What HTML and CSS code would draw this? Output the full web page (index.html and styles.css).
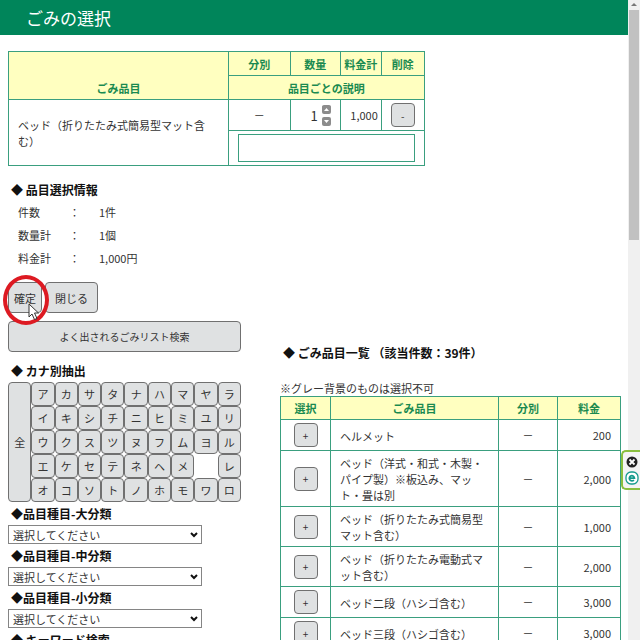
FILE: index.html
```html
<!DOCTYPE html>
<html lang="ja">
<head>
    <meta charset="UTF-8">
    <meta name="viewport" content="width=device-width, initial-scale=1.0">
    <title>ごみの選択</title>
    <link rel="stylesheet" href="styles.css">
</head>
<body>

    <div class="page">
        <header class="page-header">
            <h1>ごみの選択</h1>
        </header>

        <main class="content">
            <table class="data-table selected-table">
                <colgroup>
                    <col>
                    <col class="col-sort">
                    <col class="col-count">
                    <col class="col-total">
                    <col class="col-delete">
                </colgroup>
                <thead>
                    <tr>
                        <th rowspan="2" class="item-head">ごみ品目</th>
                        <th>分別</th>
                        <th>数量</th>
                        <th>料金計</th>
                        <th>削除</th>
                    </tr>
                    <tr>
                        <th colspan="4">品目ごとの説明</th>
                    </tr>
                </thead>
                <tbody>
                    <tr>
                        <td rowspan="2" class="name">ベッド（折りたたみ式簡易型マット含む）</td>
                        <td class="center">－</td>
                        <td>
                            <div class="counter">
                                <input type="number" value="1" aria-label="数量">
                                <div class="counter-buttons">
                                    <button type="button" aria-label="増やす"><svg viewBox="0 0 9 9"><path d="M2 6 L4.500 3 L7 6 Z"/></svg></button>
                                    <button type="button" aria-label="減らす"><svg viewBox="0 0 9 9"><path d="M2 3 L4.500 6 L7 3 Z"/></svg></button>
                                </div>
                            </div>
                        </td>
                        <td class="total">1,000</td>
                        <td class="center"><button type="button" class="btn square">-</button></td>
                    </tr>
                    <tr>
                        <td colspan="4" class="note"><input type="text" aria-label="品目ごとの説明"></td>
                    </tr>
                </tbody>
            </table>

            <section class="summary">
                <h2>◆ 品目選択情報</h2>
                <dl>
                    <div><dt>件数</dt><dd class="colon">：</dd><dd>1件</dd></div>
                    <div><dt>数量計</dt><dd class="colon">：</dd><dd>1個</dd></div>
                    <div><dt>料金計</dt><dd class="colon">：</dd><dd>1,000円</dd></div>
                </dl>
                <div class="actions">
                    <div class="confirm">
                        <button type="button" class="btn">確定</button>
                        <span class="marker"></span>
                        <svg class="cursor" viewBox="0 0 12 18"><path d="M1 1 V14 L4 11 L6.500 16.500 L9 15.500 L6.500 10 H10.500 Z"/></svg>
                    </div>
                    <button type="button" class="btn close">閉じる</button>
                </div>
            </section>

            <div class="columns">
                <section class="filters">
                    <button type="button" class="btn wide">よく出されるごみリスト検索</button>

                    <h2>◆ カナ別抽出</h2>
                    <div class="kana">
                        <button type="button" class="btn all">全</button>
                        <button type="button" class="btn">ア</button>
                        <button type="button" class="btn">カ</button>
                        <button type="button" class="btn">サ</button>
                        <button type="button" class="btn">タ</button>
                        <button type="button" class="btn">ナ</button>
                        <button type="button" class="btn">ハ</button>
                        <button type="button" class="btn">マ</button>
                        <button type="button" class="btn">ヤ</button>
                        <button type="button" class="btn">ラ</button>
                        <button type="button" class="btn">イ</button>
                        <button type="button" class="btn">キ</button>
                        <button type="button" class="btn">シ</button>
                        <button type="button" class="btn">チ</button>
                        <button type="button" class="btn">ニ</button>
                        <button type="button" class="btn">ヒ</button>
                        <button type="button" class="btn">ミ</button>
                        <button type="button" class="btn">ユ</button>
                        <button type="button" class="btn">リ</button>
                        <button type="button" class="btn">ウ</button>
                        <button type="button" class="btn">ク</button>
                        <button type="button" class="btn">ス</button>
                        <button type="button" class="btn">ツ</button>
                        <button type="button" class="btn">ヌ</button>
                        <button type="button" class="btn">フ</button>
                        <button type="button" class="btn">ム</button>
                        <button type="button" class="btn">ヨ</button>
                        <button type="button" class="btn">ル</button>
                        <button type="button" class="btn">エ</button>
                        <button type="button" class="btn">ケ</button>
                        <button type="button" class="btn">セ</button>
                        <button type="button" class="btn">テ</button>
                        <button type="button" class="btn">ネ</button>
                        <button type="button" class="btn">ヘ</button>
                        <button type="button" class="btn">メ</button>
                        <span></span>
                        <button type="button" class="btn">レ</button>
                        <button type="button" class="btn">オ</button>
                        <button type="button" class="btn">コ</button>
                        <button type="button" class="btn">ソ</button>
                        <button type="button" class="btn">ト</button>
                        <button type="button" class="btn">ノ</button>
                        <button type="button" class="btn">ホ</button>
                        <button type="button" class="btn">モ</button>
                        <button type="button" class="btn">ワ</button>
                        <button type="button" class="btn">ロ</button>
                    </div>

                    <label class="field-label" for="large">◆品目種目-大分類</label>
                    <div class="select-box">
                        <select id="large"><option>選択してください</option></select>
                        <svg viewBox="0 0 8 6"><path d="M1 1 L4 4 L7 1"/></svg>
                    </div>
                    <label class="field-label" for="middle">◆品目種目-中分類</label>
                    <div class="select-box">
                        <select id="middle"><option>選択してください</option></select>
                        <svg viewBox="0 0 8 6"><path d="M1 1 L4 4 L7 1"/></svg>
                    </div>
                    <label class="field-label" for="small">◆品目種目-小分類</label>
                    <div class="select-box">
                        <select id="small"><option>選択してください</option></select>
                        <svg viewBox="0 0 8 6"><path d="M1 1 L4 4 L7 1"/></svg>
                    </div>
                    <label class="field-label" for="keyword">◆ キーワード検索</label>
                    <input type="text" id="keyword" class="keyword">
                </section>

                <section class="results">
                    <h2>◆ ごみ品目一覧 （該当件数：39件）</h2>
                    <p>※グレー背景のものは選択不可</p>
                    <table class="data-table">
                        <colgroup>
                            <col class="col-select">
                            <col>
                            <col class="col-kind">
                            <col class="col-price">
                        </colgroup>
                        <thead>
                            <tr>
                                <th>選択</th>
                                <th>ごみ品目</th>
                                <th>分別</th>
                                <th>料金</th>
                            </tr>
                        </thead>
                        <tbody>
                            <tr>
                                <td class="center"><button type="button" class="btn square">+</button></td>
                                <td class="name">ヘルメット</td>
                                <td class="center">－</td>
                                <td class="price">200</td>
                            </tr>
                            <tr>
                                <td class="center"><button type="button" class="btn square">+</button></td>
                                <td class="name">ベッド（洋式・和式・木製・パイプ製）※板込み、マット・畳は別</td>
                                <td class="center">－</td>
                                <td class="price">2,000</td>
                            </tr>
                            <tr>
                                <td class="center"><button type="button" class="btn square">+</button></td>
                                <td class="name">ベッド（折りたたみ式簡易型マット含む）</td>
                                <td class="center">－</td>
                                <td class="price">1,000</td>
                            </tr>
                            <tr>
                                <td class="center"><button type="button" class="btn square">+</button></td>
                                <td class="name">ベッド（折りたたみ電動式マット含む）</td>
                                <td class="center">－</td>
                                <td class="price">2,000</td>
                            </tr>
                            <tr>
                                <td class="center"><button type="button" class="btn square">+</button></td>
                                <td class="name">ベッド二段（ハシゴ含む）</td>
                                <td class="center">－</td>
                                <td class="price">3,000</td>
                            </tr>
                            <tr>
                                <td class="center"><button type="button" class="btn square">+</button></td>
                                <td class="name">ベッド三段（ハシゴ含む）</td>
                                <td class="center">－</td>
                                <td class="price">3,000</td>
                            </tr>
                        </tbody>
                    </table>
                </section>
            </div>
        </main>
    </div>

    <div class="scrollbar">
        <svg viewBox="0 0 12 10"><path d="M3 6 L6 3 L9 6 Z"/></svg>
        <div class="thumb"></div>
    </div>

    <aside class="side-tab">
        <button type="button" aria-label="閉じる">
            <svg viewBox="0 0 14 14"><circle cx="7" cy="7" r="5.500" fill="#222"/><path d="M4.500 4.500 L9.500 9.500 M9.500 4.500 L4.500 9.500" stroke="#fff" stroke-width="1.800"/></svg>
        </button>
        <button type="button" aria-label="メニュー">
            <svg viewBox="0 0 14 14"><rect x="1" y="1" width="12" height="12" rx="5" fill="#fff" stroke="#159a8c" stroke-width="1.300"/><path d="M4.500 7.200 H9.500 A2.600 2.600 0 1 0 8.900 9" fill="none" stroke="#159a8c" stroke-width="1.700"/></svg>
        </button>
    </aside>

</body>
</html>
```

FILE: styles.css
```css
* {
    box-sizing: border-box;
}

body {
    font-family: 'Noto Sans CJK JP', sans-serif;
    font-size: 11px;
    line-height: 16px;
    color: #333;
    background: #fff;
    margin: 0;
    height: 100vh;
    display: flex;
    overflow: hidden;
}

button,
input,
select {
    font-family: inherit;
    font-size: inherit;
    color: inherit;
    margin: 0;
}

.page {
    flex: 1;
    min-width: 0;
    overflow: hidden;
}

.page-header {
    background: #00855a;
    padding: 0 26px;
}

h1 {
    font-size: 17px;
    font-weight: 400;
    line-height: 35px;
    color: #fff;
    margin: 0;
}

h2,
.field-label {
    display: block;
    font-size: 12px;
    font-weight: 700;
    line-height: 23px;
    color: #111;
    margin: 0;
    padding-left: 3px;
}

.content {
    padding: 16px 7px 0 8px;
}

/* tables */

.data-table {
    width: 100%;
    table-layout: fixed;
    border-collapse: collapse;
}

.data-table th,
.data-table td {
    border: 1px solid #3a9f7f;
    padding: 3px;
}

.data-table th {
    background: #ffffc0;
    color: #1a8a50;
    font-weight: 700;
}

.data-table .name {
    padding: 4px 9px 3px;
}

.data-table .center {
    text-align: center;
}

.data-table .price {
    text-align: right;
    padding-right: 9px;
}

.selected-table {
    width: 68%;
}

.selected-table th {
    padding: 4px 0 3px;
}

.selected-table .item-head {
    vertical-align: bottom;
}

.selected-table .total {
    text-align: right;
}

.selected-table .note {
    padding: 3px 9px;
}

.col-sort {
    width: 62px;
}

.col-count {
    width: 50px;
}

.col-total {
    width: 41px;
}

.col-delete {
    width: 43px;
}

.col-select {
    width: 50px;
}

.col-kind {
    width: 59px;
}

.col-price {
    width: 63px;
}

.note input {
    display: block;
    width: 100%;
    height: 28px;
    border: 1px solid #3a9f7f;
}

.counter {
    display: flex;
    justify-content: flex-end;
    align-items: center;
    gap: 4px;
    padding-right: 6px;
}

.counter input {
    width: 20px;
    border: none;
    padding: 0;
    font-size: 13px;
    text-align: right;
    background: none;
    appearance: textfield;
}

.counter input::-webkit-inner-spin-button {
    display: none;
}

.counter-buttons {
    display: grid;
    gap: 3px;
}

.counter-buttons button {
    width: 9px;
    height: 9px;
    padding: 0;
    border: none;
    border-radius: 2px;
    background: #8c8c8c;
}

.counter-buttons svg {
    display: block;
    fill: #fff;
}

/* buttons */

.btn {
    background: #dfe1e2;
    border: 1px solid #707070;
    border-radius: 4px;
    padding: 0;
    cursor: pointer;
}

.square {
    display: block;
    width: 24px;
    height: 24px;
    margin: 0 auto;
    font-size: 10px;
}

.wide {
    display: block;
    width: 100%;
    height: 31px;
    margin-bottom: 7px;
    font-size: 10px;
}

/* summary */

.summary {
    padding-top: 12px;
}

.summary dl {
    margin: 0 0 12px;
    padding-left: 10px;
}

.summary dl div {
    display: flex;
    line-height: 23px;
}

.summary dt {
    width: 51px;
}

.summary dd {
    margin: 0;
}

.summary .colon {
    width: 30px;
}

.actions {
    display: flex;
    gap: 3px;
    margin-bottom: 8px;
}

.actions .btn {
    height: 31px;
    padding: 0 5px;
}

.actions .close {
    padding: 0 9px;
}

.confirm {
    position: relative;
}

.marker {
    position: absolute;
    left: -5px;
    top: -7px;
    width: 46px;
    height: 50px;
    border: 4px solid #dd1a22;
    border-radius: 50%;
    z-index: 1;
}

.cursor {
    position: absolute;
    left: 20px;
    top: 21px;
    width: 12px;
    height: 18px;
    fill: #fff;
    stroke: #333;
    z-index: 2;
}

/* search area */

.columns {
    display: grid;
    grid-template-columns: 233px 1fr;
    gap: 39px;
}

.kana {
    display: grid;
    grid-template-columns: repeat(10, 1fr);
    grid-auto-rows: 24px;
}

.kana .all {
    grid-row: span 5;
}

.select-box {
    position: relative;
    width: 194px;
}

.select-box select {
    display: block;
    width: 100%;
    height: 19px;
    padding: 0 4px;
    border: 1px solid #858585;
    border-radius: 0;
    background: #fff;
    appearance: none;
}

.select-box svg {
    position: absolute;
    right: 4px;
    top: 7px;
    width: 8px;
    height: 6px;
    fill: none;
    stroke: #111;
    stroke-width: 2;
    pointer-events: none;
}

.keyword {
    width: 194px;
    height: 19px;
    border: 1px solid #858585;
}

.results {
    padding-top: 20px;
}

.results p {
    margin: 16px 0 0;
}

/* right edge */

.scrollbar {
    width: 12px;
    background: #f0f0f0;
}

.scrollbar svg {
    display: block;
    height: 10px;
    fill: #777;
}

.thumb {
    height: 36%;
    margin: 0 1px;
    background: #c1c1c1;
}

.side-tab {
    position: absolute;
    right: 0;
    top: 450px;
    display: grid;
    gap: 2px;
    justify-items: center;
    padding: 3px 1px 3px 2px;
    border: 2px solid #8abf3f;
    border-right: none;
    border-radius: 5px 0 0 5px;
    background: #f4f4f4;
}

.side-tab button {
    padding: 0;
    border: none;
    background: none;
}

.side-tab svg {
    display: block;
    width: 14px;
    height: 14px;
}
```
